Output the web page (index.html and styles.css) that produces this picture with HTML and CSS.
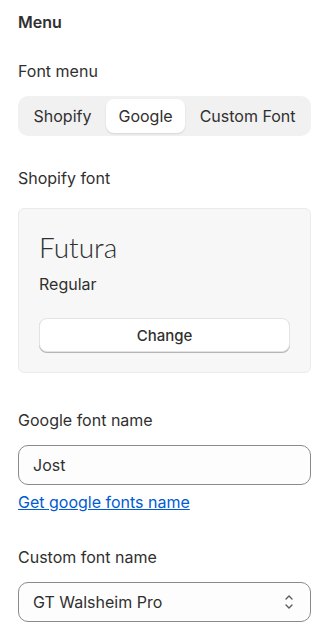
FILE: index.html
```html
<!DOCTYPE html>
<html lang="en">
<head>
  <meta charset="UTF-8" />
  <meta name="viewport" content="width=device-width, initial-scale=1.0"/>
  <title>Menu font settings</title>
  <link rel="stylesheet" href="styles.css">
</head>
<body>
  <div class="panel">
    <h2 class="panel-title">Menu</h2>

    <div class="field field-first">
      <div class="label">Font menu</div>
      <div class="segmented">
        <button class="seg">Shopify</button>
        <button class="seg active">Google</button>
        <button class="seg">Custom Font</button>
      </div>
    </div>

    <div class="field">
      <div class="label">Shopify font</div>
      <div class="font-card">
        <div class="font-name">Futura</div>
        <div class="font-style">Regular</div>
        <button class="change-btn">Change</button>
      </div>
    </div>

    <div class="field field-wide">
      <label class="label" for="google-font">Google font name</label>
      <input type="text" id="google-font" class="text-input" value="Jost">
      <a class="help-link" href="#">Get google fonts name</a>
    </div>

    <div class="field field-wide">
      <label class="label" for="custom-font">Custom font name</label>
      <div class="select-wrap">
        <select id="custom-font" class="select">
          <option selected>GT Walsheim Pro</option>
        </select>
        <svg class="select-icon" width="8" height="16" viewBox="0 0 8 16" fill="none" stroke="#5c5c5c" stroke-width="1.4" stroke-linecap="round" stroke-linejoin="round">
          <polyline points="1 5 4 2 7 5"></polyline>
          <polyline points="1 11 4 14 7 11"></polyline>
        </svg>
      </div>
    </div>
  </div>
</body>
</html>
```

FILE: styles.css
```css
* {
  margin: 0; padding: 0; box-sizing: border-box;
  font-family: Inter, 'Noto Sans', sans-serif;
}

body {
  background-color: #ffffff;
  color: #303030;
  font-size: 16px;
}

.panel {
  padding: 10px 18px 20px;
}

.panel-title {
  font-size: 16px;
  font-weight: 600;
  line-height: 24px;
}

.field {
  margin-top: 32px;
}

.field-first {
  margin-top: 27px;
}

.field-wide {
  margin-top: 37px;
}

.field-wide + .field-wide {
  margin-top: 35px;
}

.label {
  display: block;
  line-height: 20px;
  margin-bottom: 15px;
}

.segmented {
  display: flex;
  gap: 2px;
  padding: 3px;
  background-color: #f1f1f1;
  border-radius: 10px;
  height: 40px;
}

.seg {
  flex: 1 1 auto;
  border: none;
  background: transparent;
  color: #303030;
  font-size: 16px;
  padding: 0 12px;
  border-radius: 8px;
  cursor: pointer;
}

.seg.active {
  background-color: #ffffff;
  box-shadow: 0 1px 2px rgba(0, 0, 0, 0.12);
}

.font-card {
  margin-top: 20px;
  background-color: #f7f7f7;
  border: 1px solid #ebebeb;
  border-radius: 6px;
  padding: 20px;
}

.font-name {
  font-family: Lato, 'Open Sans', sans-serif;
  font-size: 28px;
  font-weight: 300;
  line-height: 36px;
  color: #303030;
}

.font-style {
  margin-top: 9px;
  line-height: 20px;
}

.change-btn {
  display: block;
  width: 100%;
  height: 34px;
  margin-top: 24px;
  background-color: #ffffff;
  border: 1px solid #e3e3e3;
  border-radius: 8px;
  box-shadow: 0 1px 0 #b5b5b5;
  color: #303030;
  font-size: 15px;
  font-weight: 500;
  cursor: pointer;
}

.text-input, .select {
  display: block;
  width: 100%;
  height: 40px;
  padding: 0 14px;
  background-color: #fdfdfd;
  border: 1px solid #8a8a8a;
  border-radius: 10px;
  color: #303030;
  font-size: 16px;
}

.help-link {
  display: inline-block;
  margin-top: 7px;
  color: #005bd3;
  line-height: 20px;
}

.select-wrap {
  position: relative;
}

.select {
  appearance: none;
  padding-right: 40px;
}

.select-icon {
  position: absolute;
  right: 18px;
  top: 12px;
  pointer-events: none;
}
```
